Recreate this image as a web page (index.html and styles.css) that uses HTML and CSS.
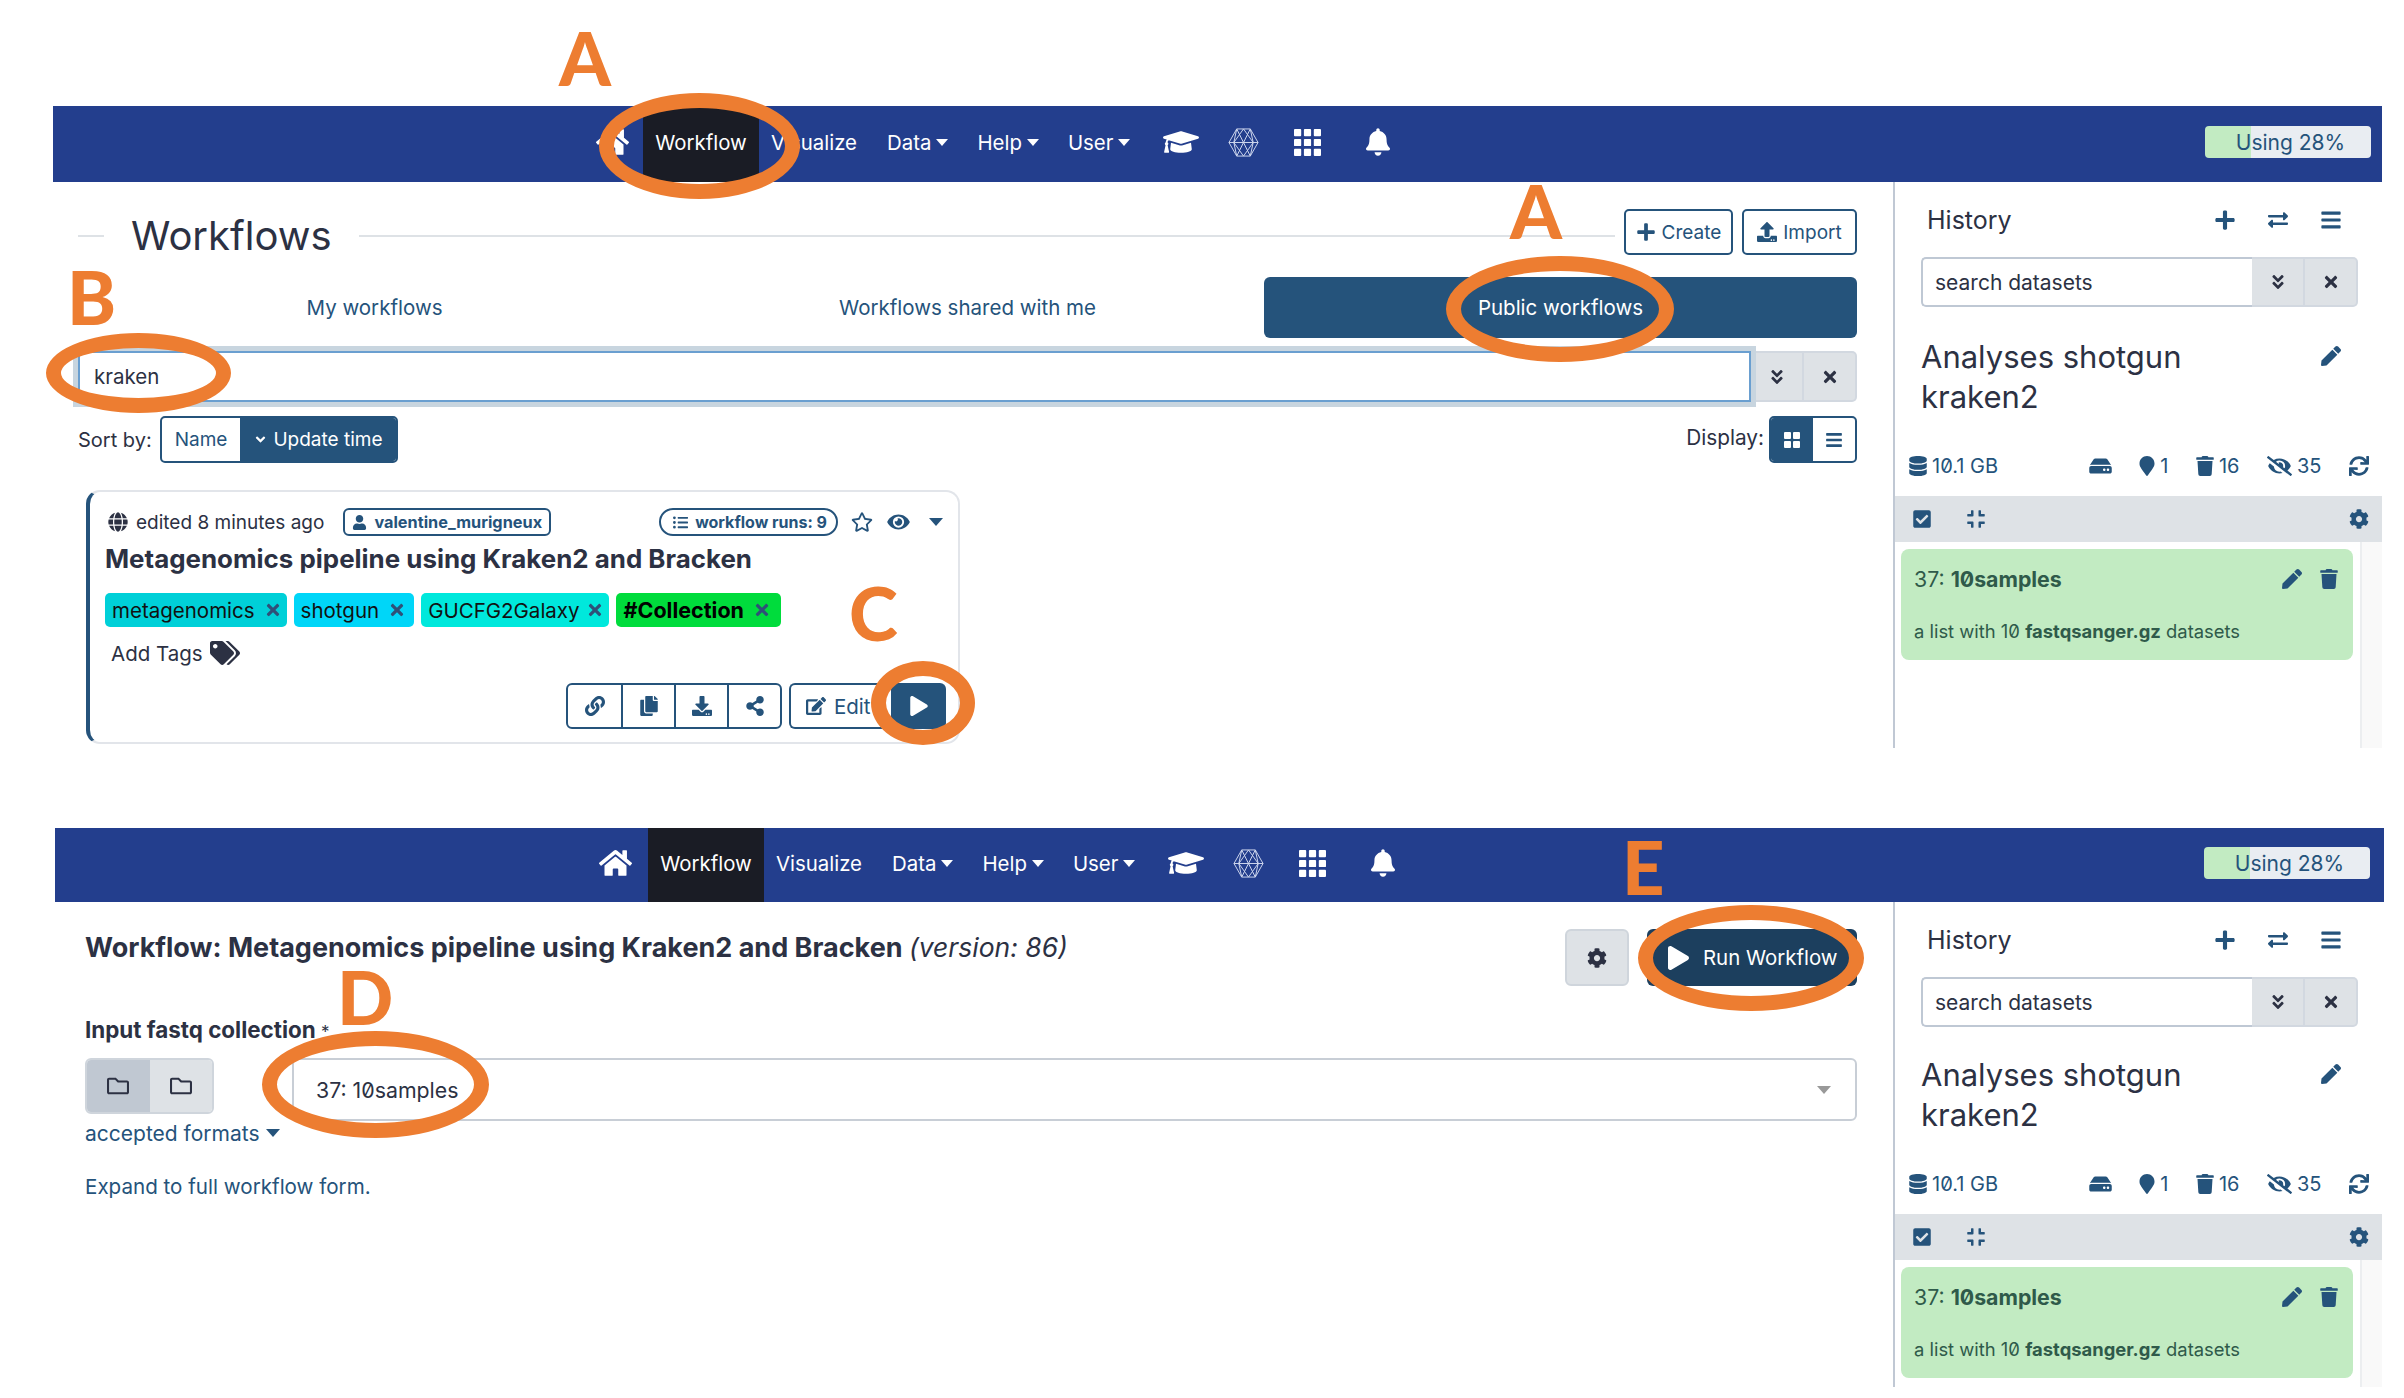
FILE: index.html
```html
<!DOCTYPE html>
<html lang="en">
  <head>
    <meta charset="UTF-8" />
    <title>Galaxy workflows</title>
    <link rel="stylesheet" href="styles.css">
  </head>
  <body>
    <svg class="sprites" aria-hidden="true">
      <symbol id="i-home" viewBox="0 0 576 512"><path d="M280.37 148.26L96 300.11V464a16 16 0 0 0 16 16l112.06-.29a16 16 0 0 0 15.92-16V368a16 16 0 0 1 16-16h64a16 16 0 0 1 16 16v95.64a16 16 0 0 0 16 16.05L464 480a16 16 0 0 0 16-16V300L295.67 148.26a12.19 12.19 0 0 0-15.3 0zM571.6 251.47L488 182.56V44.05a12 12 0 0 0-12-12h-56a12 12 0 0 0-12 12v72.61L318.47 43a48 48 0 0 0-61 0L4.34 251.47a12 12 0 0 0-1.6 16.9l25.5 31A12 12 0 0 0 45.15 301l235.22-193.74a12.19 12.19 0 0 1 15.3 0L530.9 301a12 12 0 0 0 16.9-1.6l25.5-31a12 12 0 0 0-1.7-16.93z"/></symbol>
      <symbol id="i-cap" viewBox="0 0 640 512"><path d="M622.34 153.2L343.4 67.5c-15.2-4.67-31.6-4.67-46.79 0L17.66 153.2c-23.54 7.23-23.54 38.36 0 45.59l48.63 14.94c-10.67 13.19-17.23 29.28-17.88 46.9C38.78 266.15 32 276.11 32 288c0 10.78 5.68 19.85 13.86 25.65L20.33 428.53C18.11 438.52 25.71 448 35.94 448h56.11c10.24 0 17.84-9.48 15.62-19.47L82.14 313.65C90.32 307.85 96 298.78 96 288c0-11.57-6.47-21.25-15.66-26.87.76-15.02 8.44-28.3 20.69-36.72L296.6 284.5c9.06 2.78 26.44 6.25 46.79 0l278.95-85.7c23.55-7.24 23.55-38.36 0-45.6zM352.79 315.09c-28.53 8.76-52.84 3.92-65.59 0l-145.02-44.55L128 384c0 35.35 85.96 64 192 64s192-28.65 192-64l-14.18-113.47-145.03 44.56z"/></symbol>
      <symbol id="i-hex" viewBox="0 0 32 32"><g fill="none" stroke="currentColor" stroke-width="1"><path d="M9 2h14l8 14-8 14H9L1 16z"/><path d="M9 2l14 28M23 2L9 30M1 16h30M9 2l-3 14 3 14M23 2l3 14-3 14M6 16l10-14 10 14-10 14z"/></g></symbol>
      <symbol id="i-grid" viewBox="0 0 30 30"><rect width="8" height="8" rx="1"/><rect x="11" width="8" height="8" rx="1"/><rect x="22" width="8" height="8" rx="1"/><rect y="11" width="8" height="8" rx="1"/><rect x="11" y="11" width="8" height="8" rx="1"/><rect x="22" y="11" width="8" height="8" rx="1"/><rect y="22" width="8" height="8" rx="1"/><rect x="11" y="22" width="8" height="8" rx="1"/><rect x="22" y="22" width="8" height="8" rx="1"/></symbol>
      <symbol id="i-large" viewBox="0 0 16 16"><rect width="7" height="7" rx="1"/><rect x="9" width="7" height="7" rx="1"/><rect y="9" width="7" height="7" rx="1"/><rect x="9" y="9" width="7" height="7" rx="1"/></symbol>
      <symbol id="i-bell" viewBox="0 0 448 512"><path d="M224 512c35.32 0 63.97-28.65 63.97-64H160.03c0 35.35 28.65 64 63.97 64zm215.39-149.71c-19.32-20.76-55.47-51.99-55.47-154.29 0-77.7-54.48-139.9-127.94-155.16V32c0-17.67-14.32-32-31.98-32s-31.98 14.33-31.98 32v20.84C118.56 68.1 64.08 130.3 64.08 208c0 102.3-36.15 133.53-55.47 154.29-6 6.45-8.66 14.16-8.61 21.71.11 16.4 12.98 32 32.1 32h383.8c19.12 0 32-15.6 32.1-32 .05-7.55-2.61-15.27-8.61-21.71z"/></symbol>
      <symbol id="i-plus" viewBox="0 0 448 512"><path d="M416 208H272V64c0-17.67-14.33-32-32-32h-32c-17.67 0-32 14.33-32 32v144H32c-17.67 0-32 14.33-32 32v32c0 17.67 14.33 32 32 32h144v144c0 17.67 14.33 32 32 32h32c17.67 0 32-14.33 32-32V304h144c17.67 0 32-14.33 32-32v-32c0-17.67-14.33-32-32-32z"/></symbol>
      <symbol id="i-exchange" viewBox="0 0 512 512"><path d="M0 168v-16c0-13.255 10.745-24 24-24h360V80c0-21.367 25.899-32.042 40.971-16.971l80 80c9.372 9.373 9.372 24.569 0 33.941l-80 80C409.956 271.982 384 261.456 384 240v-48H24c-13.255 0-24-10.745-24-24zm488 152H128v-48c0-21.314-25.862-32.08-40.971-16.971l-80 80c-9.372 9.373-9.372 24.569 0 33.941l80 80C102.057 463.997 128 453.437 128 432v-48h360c13.255 0 24-10.745 24-24v-16c0-13.255-10.745-24-24-24z"/></symbol>
      <symbol id="i-bars" viewBox="0 0 448 512"><path d="M16 132h416c8.837 0 16-7.163 16-16V76c0-8.837-7.163-16-16-16H16C7.163 60 0 67.163 0 76v40c0 8.837 7.163 16 16 16zm0 160h416c8.837 0 16-7.163 16-16v-40c0-8.837-7.163-16-16-16H16c-8.837 0-16 7.163-16 16v40c0 8.837 7.163 16 16 16zm0 160h416c8.837 0 16-7.163 16-16v-40c0-8.837-7.163-16-16-16H16c-8.837 0-16 7.163-16 16v40c0 8.837 7.163 16 16 16z"/></symbol>
      <symbol id="i-dbl" viewBox="0 0 320 512"><path d="M143 256.3L7 120.3c-9.4-9.4-9.4-24.6 0-33.9l22.6-22.6c9.4-9.4 24.6-9.4 33.9 0l96.4 96.4 96.4-96.4c9.4-9.4 24.6-9.4 33.9 0L313 86.3c9.4 9.4 9.4 24.6 0 33.9l-136 136c-9.4 9.5-24.6 9.5-34 .1zm34 192l136-136c9.4-9.4 9.4-24.6 0-33.9l-22.6-22.6c-9.4-9.4-24.6-9.4-33.9 0L160 352.1l-96.4-96.4c-9.4-9.4-24.6-9.4-33.9 0L7 278.3c-9.4 9.4-9.4 24.6 0 33.9l136 136c9.4 9.5 24.6 9.5 34 .1z"/></symbol>
      <symbol id="i-angle" viewBox="0 0 320 512"><path d="M143 352.3L7 216.3c-9.4-9.4-9.4-24.6 0-33.9l22.6-22.6c9.4-9.4 24.6-9.4 33.9 0l96.4 96.4 96.4-96.4c9.4-9.4 24.6-9.4 33.9 0l22.6 22.6c9.4 9.4 9.4 24.6 0 33.9l-136 136c-9.2 9.4-24.4 9.4-33.8 0z"/></symbol>
      <symbol id="i-times" viewBox="0 0 352 512"><path d="M242.72 256l100.07-100.07c12.28-12.28 12.28-32.19 0-44.48l-22.24-22.24c-12.28-12.28-32.19-12.28-44.48 0L176 189.28 75.93 89.21c-12.28-12.28-32.19-12.28-44.48 0L9.21 111.45c-12.28 12.28-12.28 32.19 0 44.48L109.28 256 9.21 356.07c-12.28 12.28-12.28 32.19 0 44.48l22.24 22.24c12.28 12.28 32.2 12.28 44.48 0L176 322.72l100.07 100.07c12.28 12.28 32.2 12.28 44.48 0l22.24-22.24c12.28-12.28 12.28-32.19 0-44.48L242.72 256z"/></symbol>
      <symbol id="i-pen" viewBox="0 0 512 512"><path d="M290.74 93.24l128.02 128.02-277.99 277.99-114.14 12.6C11.35 513.54-1.56 500.62.14 485.34l12.7-114.22 277.9-277.88zm207.2-19.06l-60.11-60.11c-18.75-18.75-49.16-18.75-67.91 0l-56.55 56.55 128.02 128.02 56.55-56.55c18.75-18.76 18.75-49.16 0-67.91z"/></symbol>
      <symbol id="i-db" viewBox="0 0 448 512"><path d="M448 73.143v45.714C448 159.143 347.667 192 224 192S0 159.143 0 118.857V73.143C0 32.857 100.333 0 224 0s224 32.857 224 73.143zM448 176v102.857C448 319.143 347.667 352 224 352S0 319.143 0 278.857V176c48.125 33.143 136.208 48.572 224 48.572S399.874 209.143 448 176zm0 160v102.857C448 479.143 347.667 512 224 512S0 479.143 0 438.857V336c48.125 33.143 136.208 48.572 224 48.572S399.874 369.143 448 336z"/></symbol>
      <symbol id="i-hdd" viewBox="0 0 576 512"><path d="M576 304v96c0 26.51-21.49 48-48 48H48c-26.51 0-48-21.49-48-48v-96c0-26.51 21.49-48 48-48h480c26.51 0 48 21.49 48 48zm-48-80a79.557 79.557 0 0 1 30.777 6.165L462.25 85.374A48.003 48.003 0 0 0 422.311 64H153.689a48 48 0 0 0-39.938 21.374L17.223 230.165A79.557 79.557 0 0 1 48 224h480zm-48 96c-17.673 0-32 14.327-32 32s14.327 32 32 32 32-14.327 32-32-14.327-32-32-32zm-96 0c-17.673 0-32 14.327-32 32s14.327 32 32 32 32-14.327 32-32-14.327-32-32-32z"/></symbol>
      <symbol id="i-pin" viewBox="0 0 384 512"><path d="M172.268 501.67C26.97 291.031 0 269.413 0 192 0 85.961 85.961 0 192 0s192 85.961 192 192c0 77.413-26.97 99.031-172.268 309.67-9.535 13.774-29.93 13.773-39.464 0z"/></symbol>
      <symbol id="i-trash" viewBox="0 0 448 512"><path d="M432 32H312l-9.4-18.7A24 24 0 0 0 281.1 0H166.8a23.72 23.72 0 0 0-21.4 13.3L136 32H16A16 16 0 0 0 0 48v32a16 16 0 0 0 16 16h416a16 16 0 0 0 16-16V48a16 16 0 0 0-16-16zM53.2 467a48 48 0 0 0 47.9 45h245.8a48 48 0 0 0 47.9-45L416 128H32z"/></symbol>
      <symbol id="i-slash" viewBox="0 0 640 512"><path d="M320 400c-75.85 0-137.25-58.71-142.9-133.11L72.2 185.82c-13.79 17.3-26.48 35.59-36.72 55.59a32.35 32.35 0 0 0 0 29.19C89.71 376.41 197.07 448 320 448c26.91 0 52.87-4 77.89-10.46L346 397.39a144.13 144.13 0 0 1-26 2.61zm313.82 58.1l-110.55-85.44a331.25 331.25 0 0 0 81.25-102.07 32.35 32.35 0 0 0 0-29.19C550.29 135.59 442.93 64 320 64a308.15 308.15 0 0 0-147.32 37.7L45.46 3.37A16 16 0 0 0 23 6.18L3.37 31.45A16 16 0 0 0 6.18 53.9l588.36 454.73a16 16 0 0 0 22.46-2.81l19.64-25.27a16 16 0 0 0-2.82-22.45zm-183.72-142l-39.3-30.38A94.75 94.75 0 0 0 416 256a94.76 94.76 0 0 0-121.31-92.21A47.65 47.65 0 0 1 304 192a46.64 46.64 0 0 1-1.54 10l-73.61-56.89A142.31 142.31 0 0 1 320 112a143.92 143.92 0 0 1 144 144c0 21.63-5.29 41.79-13.9 60.11z"/></symbol>
      <symbol id="i-sync" viewBox="0 0 512 512"><path d="M440.65 12.57l4 82.77A247.16 247.16 0 0 0 255.83 8C134.73 8 33.91 94.92 12.29 209.82A12 12 0 0 0 24.09 224h49.05a12 12 0 0 0 11.67-9.26 175.91 175.91 0 0 1 317-56.94l-101.46-4.86a12 12 0 0 0-12.57 12v47.41a12 12 0 0 0 12 12H500a12 12 0 0 0 12-12V12a12 12 0 0 0-12-12h-47.37a12 12 0 0 0-11.98 12.57zM255.83 432a175.61 175.61 0 0 1-146-77.8l101.8 4.87a12 12 0 0 0 12.57-12v-47.4a12 12 0 0 0-12-12H12a12 12 0 0 0-12 12V500a12 12 0 0 0 12 12h47.35a12 12 0 0 0 12-12.6l-4.15-82.57A247.17 247.17 0 0 0 255.83 504c121.11 0 221.93-86.92 243.55-201.82a12 12 0 0 0-11.8-14.18h-49.05a12 12 0 0 0-11.67 9.26A175.86 175.86 0 0 1 255.83 432z"/></symbol>
      <symbol id="i-check" viewBox="0 0 448 512"><path d="M400 480H48c-26.51 0-48-21.49-48-48V80c0-26.51 21.49-48 48-48h352c26.51 0 48 21.49 48 48v352c0 26.51-21.49 48-48 48zm-204.686-98.059l184-184c6.248-6.248 6.248-16.379 0-22.627l-22.627-22.627c-6.248-6.248-16.379-6.249-22.628 0L184 302.745l-70.059-70.059c-6.248-6.248-16.379-6.248-22.628 0l-22.627 22.627c-6.248 6.248-6.248 16.379 0 22.627l104 104c6.249 6.25 16.379 6.25 22.628.001z"/></symbol>
      <symbol id="i-compress" viewBox="0 0 448 512"><path d="M436 192H312c-13.3 0-24-10.7-24-24V44c0-6.6 5.4-12 12-12h40c6.6 0 12 5.4 12 12v84h84c6.6 0 12 5.4 12 12v40c0 6.6-5.4 12-12 12zm-276-24V44c0-6.6-5.4-12-12-12h-40c-6.6 0-12 5.4-12 12v84H12c-6.6 0-12 5.4-12 12v40c0 6.6 5.4 12 12 12h124c13.3 0 24-10.7 24-24zm0 300V344c0-13.3-10.7-24-24-24H12c-6.6 0-12 5.4-12 12v40c0 6.6 5.4 12 12 12h84v84c0 6.6 5.4 12 12 12h40c6.6 0 12-5.4 12-12zm192 0v-84h84c6.6 0 12-5.4 12-12v-40c0-6.6-5.4-12-12-12H312c-13.3 0-24 10.7-24 24v124c0 6.6 5.4 12 12 12h40c6.6 0 12-5.4 12-12z"/></symbol>
      <symbol id="i-cog" viewBox="0 0 512 512"><path d="M487.4 315.7l-42.6-24.6c4.3-23.2 4.3-47 0-70.2l42.6-24.6c4.9-2.8 7.1-8.6 5.5-14-11.1-35.6-30-67.8-54.7-94.6-3.8-4.1-10-5.1-14.8-2.3L380.8 110c-17.9-15.4-38.5-27.3-60.8-35.1V25.8c0-5.6-3.9-10.5-9.4-11.7-36.7-8.2-74.3-7.8-109.2 0-5.5 1.2-9.4 6.1-9.4 11.7V75c-22.2 7.9-42.8 19.8-60.8 35.1L88.7 85.5c-4.9-2.8-11-1.9-14.8 2.3-24.7 26.7-43.6 58.9-54.7 94.6-1.7 5.4.6 11.2 5.5 14L67.3 221c-4.3 23.2-4.3 47 0 70.2l-42.6 24.6c-4.9 2.8-7.1 8.6-5.5 14 11.1 35.6 30 67.8 54.7 94.6 3.8 4.1 10 5.1 14.8 2.3l42.6-24.6c17.9 15.4 38.5 27.3 60.8 35.1v49.2c0 5.6 3.9 10.5 9.4 11.7 36.7 8.2 74.3 7.8 109.2 0 5.5-1.2 9.4-6.1 9.4-11.7v-49.2c22.2-7.9 42.8-19.8 60.8-35.1l42.6 24.6c4.9 2.8 11 1.9 14.8-2.3 24.7-26.7 43.6-58.9 54.7-94.6 1.5-5.5-.7-11.3-5.6-14.1zM256 336c-44.1 0-80-35.9-80-80s35.9-80 80-80 80 35.9 80 80-35.9 80-80 80z"/></symbol>
      <symbol id="i-link" viewBox="0 0 512 512"><path d="M326.612 185.391c59.747 59.809 58.927 155.698.36 214.59-.11.12-.24.25-.36.37l-67.2 67.2c-59.27 59.27-155.699 59.262-214.96 0-59.27-59.26-59.27-155.7 0-214.96l37.106-37.106c9.84-9.84 26.786-3.3 27.294 10.606.648 17.722 3.826 35.527 9.69 52.721 1.986 5.822.567 12.262-3.783 16.612l-13.087 13.087c-28.026 28.026-28.905 73.66-1.155 101.96 28.024 28.579 74.086 28.749 102.325.51l67.2-67.19c28.191-28.191 28.073-73.757 0-101.83-3.701-3.694-7.429-6.564-10.341-8.569a16.037 16.037 0 0 1-6.947-12.606c-.396-10.567 3.348-21.456 11.698-29.806l21.054-21.055c5.521-5.521 14.182-6.199 20.584-1.731a152.482 152.482 0 0 1 20.522 17.197zM467.547 44.449c-59.261-59.262-155.69-59.27-214.96 0l-67.2 67.2c-.12.12-.25.25-.36.37-58.566 58.892-59.387 154.781.36 214.59a152.454 152.454 0 0 0 20.521 17.196c6.402 4.468 15.064 3.789 20.584-1.731l21.054-21.055c8.35-8.35 12.094-19.239 11.698-29.806a16.037 16.037 0 0 0-6.947-12.606c-2.912-2.005-6.64-4.875-10.341-8.569-28.073-28.073-28.191-73.639 0-101.83l67.2-67.19c28.239-28.239 74.3-28.069 102.325.51 27.75 28.3 26.872 73.934-1.155 101.96l-13.087 13.087c-4.35 4.35-5.769 10.79-3.783 16.612 5.864 17.194 9.042 34.999 9.69 52.721.509 13.906 17.454 20.446 27.294 10.606l37.106-37.106c59.271-59.259 59.271-155.699.001-214.959z"/></symbol>
      <symbol id="i-copy" viewBox="0 0 448 512"><path d="M320 448v40c0 13.255-10.745 24-24 24H24c-13.255 0-24-10.745-24-24V120c0-13.255 10.745-24 24-24h72v296c0 30.879 25.121 56 56 56h168zm0-344V0H152c-13.255 0-24 10.745-24 24v368c0 13.255 10.745 24 24 24h272c13.255 0 24-10.745 24-24V128H344c-13.2 0-24-10.8-24-24zm120.971-31.029L375.029 7.029A24 24 0 0 0 358.059 0H352v96h96v-6.059a24 24 0 0 0-7.029-16.97z"/></symbol>
      <symbol id="i-download" viewBox="0 0 512 512"><path d="M216 0h80c13.3 0 24 10.7 24 24v168h87.7c17.8 0 26.7 21.5 14.1 34.1L269.7 378.3c-7.5 7.5-19.8 7.5-27.3 0L90.1 226.1c-12.6-12.6-3.7-34.1 14.1-34.1H192V24c0-13.3 10.7-24 24-24zm296 376v112c0 13.3-10.7 24-24 24H24c-13.3 0-24-10.7-24-24V376c0-13.3 10.7-24 24-24h146.7l49 49c20.1 20.1 52.5 20.1 72.6 0l49-49H488c13.3 0 24 10.7 24 24zm-124 88c0-11-9-20-20-20s-20 9-20 20 9 20 20 20 20-9 20-20zm64 0c0-11-9-20-20-20s-20 9-20 20 9 20 20 20 20-9 20-20z"/></symbol>
      <symbol id="i-upload" viewBox="0 0 512 512"><path d="M296 384h-80c-13.3 0-24-10.7-24-24V192h-87.7c-17.8 0-26.7-21.5-14.1-34.1L242.3 5.7c7.5-7.5 19.8-7.5 27.3 0l152.2 152.2c12.6 12.6 3.7 34.1-14.1 34.1H320v168c0 13.3-10.7 24-24 24zm216-8v112c0 13.3-10.7 24-24 24H24c-13.3 0-24-10.7-24-24V376c0-13.3 10.7-24 24-24h136v8c0 30.9 25.1 56 56 56h80c30.9 0 56-25.1 56-56v-8h136c13.3 0 24 10.7 24 24zm-124 88c0-11-9-20-20-20s-20 9-20 20 9 20 20 20 20-9 20-20zm64 0c0-11-9-20-20-20s-20 9-20 20 9 20 20 20 20-9 20-20z"/></symbol>
      <symbol id="i-share" viewBox="0 0 448 512"><path d="M352 320c-22.608 0-43.387 7.819-59.79 20.895l-102.486-64.054a96.551 96.551 0 0 0 0-41.683l102.486-64.054C308.613 184.181 329.392 192 352 192c53.019 0 96-42.981 96-96S405.019 0 352 0s-96 42.981-96 96c0 7.158.79 14.13 2.276 20.841L155.79 180.895C139.387 167.819 118.608 160 96 160c-53.019 0-96 42.981-96 96s42.981 96 96 96c22.608 0 43.387-7.819 59.79-20.895l102.486 64.054A96.301 96.301 0 0 0 256 416c0 53.019 42.981 96 96 96s96-42.981 96-96-42.981-96-96-96z"/></symbol>
      <symbol id="i-edit" viewBox="0 0 576 512"><path d="M402.6 83.2l90.2 90.2c3.8 3.8 3.8 10 0 13.8L274.4 405.6l-92.8 10.3c-12.4 1.4-22.9-9.1-21.5-21.5l10.3-92.8L388.8 83.2c3.8-3.8 10-3.8 13.8 0zm162-22.9l-48.8-48.8c-15.2-15.2-39.9-15.2-55.2 0l-35.4 35.4c-3.8 3.8-3.8 10 0 13.8l90.2 90.2c3.8 3.8 10 3.8 13.8 0l35.4-35.4c15.2-15.3 15.2-40 0-55.2zM384 346.2V448H64V128h229.8c3.2 0 6.2-1.3 8.5-3.5l40-40c7.6-7.6 2.2-20.5-8.5-20.5H48C21.5 64 0 85.5 0 112v352c0 26.5 21.5 48 48 48h352c26.5 0 48-21.5 48-48V306.2c0-10.7-12.9-16-20.5-8.5l-40 40c-2.2 2.3-3.5 5.3-3.5 8.5z"/></symbol>
      <symbol id="i-play" viewBox="0 0 448 512"><path d="M424.4 214.7L72.4 6.6C43.8-10.3 0 6.1 0 47.9V464c0 37.5 40.7 60.1 72.4 41.3l352-208c31.4-18.5 31.5-64.1 0-82.6z"/></symbol>
      <symbol id="i-user" viewBox="0 0 448 512"><path d="M224 256c70.7 0 128-57.3 128-128S294.7 0 224 0 96 57.3 96 128s57.3 128 128 128zm89.6 32h-16.7c-22.2 10.2-46.9 16-72.9 16s-50.6-5.8-72.9-16h-16.7C60.2 288 0 348.2 0 422.4V464c0 26.5 21.5 48 48 48h352c26.5 0 48-21.5 48-48v-41.6c0-74.2-60.2-134.4-134.4-134.4z"/></symbol>
      <symbol id="i-globe" viewBox="0 0 496 512"><path d="M336.5 160C322 70.7 287.8 8 248 8s-74 62.7-88.5 152h177zM152 256c0 22.2 1.2 43.5 3.3 64h185.3c2.1-20.5 3.3-41.8 3.3-64s-1.2-43.5-3.3-64H155.3c-2.1 20.5-3.3 41.8-3.3 64zm324.7-96c-28.6-67.9-86.5-120.4-158-141.6 24.4 33.8 41.2 84.7 50 141.6h108zM177.2 18.4C105.8 39.6 47.8 92.1 19.3 160h108c8.7-56.9 25.5-107.8 49.9-141.6zM487.4 192H372.7c2.1 21 3.3 42.5 3.3 64s-1.2 43-3.3 64h114.6c5.5-20.5 8.6-41.8 8.6-64s-3.1-43.5-8.5-64zM120 256c0-21.5 1.2-43 3.3-64H8.6C3.2 212.5 0 233.8 0 256s3.2 43.5 8.6 64h114.6c-2-21-3.2-42.5-3.2-64zm39.5 96c14.5 89.3 48.7 152 88.5 152s74-62.7 88.5-152h-177zm159.3 141.6c71.4-21.2 129.4-73.7 158-141.6h-108c-8.8 56.9-25.6 107.8-50 141.6zM19.3 352c28.6 67.9 86.5 120.4 158 141.6-24.4-33.8-41.2-84.7-50-141.6h-108z"/></symbol>
      <symbol id="i-list" viewBox="0 0 512 512"><path d="M48 48a48 48 0 1 0 48 48 48 48 0 0 0-48-48zm0 160a48 48 0 1 0 48 48 48 48 0 0 0-48-48zm0 160a48 48 0 1 0 48 48 48 48 0 0 0-48-48zm448 16H176a16 16 0 0 0-16 16v32a16 16 0 0 0 16 16h320a16 16 0 0 0 16-16v-32a16 16 0 0 0-16-16zm0-320H176a16 16 0 0 0-16 16v32a16 16 0 0 0 16 16h320a16 16 0 0 0 16-16V80a16 16 0 0 0-16-16zm0 160H176a16 16 0 0 0-16 16v32a16 16 0 0 0 16 16h320a16 16 0 0 0 16-16v-32a16 16 0 0 0-16-16z"/></symbol>
      <symbol id="i-star" viewBox="0 0 576 512"><path d="M528.1 171.5L382 150.2 316.7 17.8c-11.7-23.6-45.6-23.9-57.4 0L194 150.2 47.9 171.5c-26.2 3.8-36.7 36.1-17.7 54.6l105.7 103-25 145.5c-4.5 26.3 23.2 46 46.4 33.7L288 439.6l130.7 68.7c23.2 12.2 50.9-7.4 46.4-33.7l-25-145.5 105.7-103c19-18.5 8.5-50.8-17.7-54.6zM388.6 312.3l23.7 138.4L288 385.4l-124.3 65.3 23.7-138.4-100.6-98 139-20.2 62.2-126 62.2 126 139 20.2-100.6 98z"/></symbol>
      <symbol id="i-eye" viewBox="0 0 576 512"><path d="M572.52 241.4C518.29 135.59 410.93 64 288 64S57.68 135.64 3.48 241.41a32.35 32.35 0 0 0 0 29.19C57.71 376.41 165.07 448 288 448s230.32-71.64 284.52-177.41a32.35 32.35 0 0 0 0-29.19zM288 400a144 144 0 1 1 144-144 143.93 143.93 0 0 1-144 144zm0-240a95.31 95.31 0 0 0-25.31 3.79 47.85 47.85 0 0 1-66.9 66.9A95.78 95.78 0 1 0 288 160z"/></symbol>
      <symbol id="i-tags" viewBox="0 0 640 512"><path d="M497.941 225.941L286.059 14.059A48 48 0 0 0 252.118 0H48C21.49 0 0 21.49 0 48v204.118a48 48 0 0 0 14.059 33.941l211.882 211.882c18.744 18.745 49.136 18.746 67.882 0l204.118-204.118c18.745-18.745 18.745-49.137 0-67.882zM112 160c-26.51 0-48-21.49-48-48s21.49-48 48-48 48 21.49 48 48-21.49 48-48 48zm513.941 133.823L421.823 497.941c-18.745 18.745-49.137 18.745-67.882 0l-.36-.36L527.64 323.522c16.999-16.999 26.36-39.6 26.36-63.64s-9.362-46.641-26.36-63.64L331.397 0h48.721a48 48 0 0 1 33.941 14.059l211.882 211.882c18.745 18.745 18.745 49.137 0 67.882z"/></symbol>
      <symbol id="i-folder" viewBox="0 0 512 512"><path d="M464 128H272l-54.63-54.63c-6-6-14.14-9.37-22.63-9.37H48C21.49 64 0 85.49 0 112v288c0 26.51 21.49 48 48 48h416c26.51 0 48-21.49 48-48V176c0-26.51-21.49-48-48-48zm0 272H48V112h140.12l54.63 54.63c6 6 14.14 9.37 22.63 9.37H464v224z"/></symbol>
    </svg>

    <!-- first shot: workflow list -->
    <section class="shot shot-list">
      <header class="masthead">
        <svg class="nav-home"><use href="#i-home"/></svg>
        <a class="nav-item active">Workflow</a>
        <a class="nav-item">Visualize</a>
        <a class="nav-item caret">Data</a>
        <a class="nav-item caret">Help</a>
        <a class="nav-item caret">User</a>
        <svg class="nav-cap"><use href="#i-cap"/></svg>
        <svg class="nav-hex"><use href="#i-hex"/></svg>
        <svg class="nav-grid"><use href="#i-grid"/></svg>
        <svg class="nav-bell"><use href="#i-bell"/></svg>
        <div class="quota"><span class="quota-text">Using 28%</span></div>
      </header>
      <div class="body-row">
        <main class="center">
          <div class="heading-row">
            <div class="heading">
              <span class="heading-line short"></span>
              <h1>Workflows</h1>
              <span class="heading-line"></span>
            </div>
            <button class="btn-outline btn-create"><svg class="ico"><use href="#i-plus"/></svg>Create</button>
            <button class="btn-outline btn-import"><svg class="ico"><use href="#i-upload"/></svg>Import</button>
          </div>
          <nav class="tabs">
            <a class="tab">My workflows</a>
            <a class="tab">Workflows shared with me</a>
            <a class="tab selected">Public workflows</a>
          </nav>
          <div class="search">
            <div class="search-input focus">kraken</div>
            <div class="search-btn"><svg class="ico"><use href="#i-dbl"/></svg></div>
            <div class="search-btn"><svg class="ico"><use href="#i-times"/></svg></div>
          </div>
          <div class="sort-row">
            <span class="sort-label">Sort by:</span>
            <div class="toggle">
              <span class="toggle-item">Name</span>
              <span class="toggle-item on"><svg class="ico-sm"><use href="#i-angle"/></svg>Update time</span>
            </div>
            <span class="display-label">Display:</span>
            <div class="toggle">
              <span class="toggle-item on square"><svg class="ico"><use href="#i-large"/></svg></span>
              <span class="toggle-item square"><svg class="ico"><use href="#i-bars"/></svg></span>
            </div>
          </div>
          <article class="wf-card">
            <div class="wf-meta">
              <svg class="ico globe"><use href="#i-globe"/></svg>
              <span>edited 8 minutes ago</span>
              <span class="badge"><svg class="ico-sm"><use href="#i-user"/></svg>valentine_murigneux</span>
              <span class="badge pill"><svg class="ico-sm"><use href="#i-list"/></svg>workflow runs: 9</span>
              <svg class="ico star"><use href="#i-star"/></svg>
              <svg class="ico eye"><use href="#i-eye"/></svg>
              <span class="tri"></span>
            </div>
            <h2 class="wf-title">Metagenomics pipeline using Kraken2 and Bracken</h2>
            <div class="tags">
              <span class="tag t-teal">metagenomics<svg><use href="#i-times"/></svg></span>
              <span class="tag t-sky">shotgun<svg><use href="#i-times"/></svg></span>
              <span class="tag t-mint">GUCFG2Galaxy<svg><use href="#i-times"/></svg></span>
              <span class="tag t-green">#Collection<svg><use href="#i-times"/></svg></span>
            </div>
            <div class="add-tags">Add Tags<svg><use href="#i-tags"/></svg></div>
            <div class="wf-actions">
              <div class="act-group">
                <span class="act"><svg class="ico"><use href="#i-link"/></svg></span>
                <span class="act"><svg class="ico"><use href="#i-copy"/></svg></span>
                <span class="act"><svg class="ico"><use href="#i-download"/></svg></span>
                <span class="act"><svg class="ico"><use href="#i-share"/></svg></span>
              </div>
              <span class="act-edit"><svg class="ico"><use href="#i-edit"/></svg>Edit</span>
              <span class="act-run"><svg class="ico"><use href="#i-play"/></svg></span>
            </div>
          </article>
        </main>
        <aside class="side">
          <div class="side-head">
            <span class="side-name">History</span>
            <svg class="ico head-ico"><use href="#i-plus"/></svg>
            <svg class="ico head-ico"><use href="#i-exchange"/></svg>
            <svg class="ico head-ico"><use href="#i-bars"/></svg>
          </div>
          <div class="side-search">
            <div class="search-input">search datasets</div>
            <div class="search-btn"><svg class="ico"><use href="#i-dbl"/></svg></div>
            <div class="search-btn"><svg class="ico"><use href="#i-times"/></svg></div>
          </div>
          <div class="side-title">
            <span>Analyses shotgun kraken2</span>
            <svg class="ico"><use href="#i-pen"/></svg>
          </div>
          <div class="stats">
            <span class="stat first"><svg class="s-db"><use href="#i-db"/></svg>10.1 GB</span>
            <span class="stat"><svg class="s-hdd"><use href="#i-hdd"/></svg></span>
            <span class="stat"><svg class="s-pin"><use href="#i-pin"/></svg>1</span>
            <span class="stat"><svg class="s-trash"><use href="#i-trash"/></svg>16</span>
            <span class="stat"><svg class="s-slash"><use href="#i-slash"/></svg>35</span>
            <span class="stat"><svg class="s-sync"><use href="#i-sync"/></svg></span>
          </div>
          <div class="tool-bar">
            <svg class="ico"><use href="#i-check"/></svg>
            <svg class="ico"><use href="#i-compress"/></svg>
            <svg class="ico gear"><use href="#i-cog"/></svg>
          </div>
          <div class="side-list">
            <div class="side-items">
              <div class="dataset">
                <div class="dataset-head">
                  <span>37: <b>10samples</b></span>
                  <svg class="ico"><use href="#i-pen"/></svg>
                  <svg class="ico"><use href="#i-trash"/></svg>
                </div>
                <div class="dataset-info">a list with 10 <b>fastqsanger.gz</b> datasets</div>
              </div>
            </div>
            <div class="scroll-strip"></div>
          </div>
        </aside>
      </div>
    </section>

    <!-- second shot: run form -->
    <section class="shot shot-run">
      <header class="masthead">
        <svg class="nav-home"><use href="#i-home"/></svg>
        <a class="nav-item active">Workflow</a>
        <a class="nav-item">Visualize</a>
        <a class="nav-item caret">Data</a>
        <a class="nav-item caret">Help</a>
        <a class="nav-item caret">User</a>
        <svg class="nav-cap"><use href="#i-cap"/></svg>
        <svg class="nav-hex"><use href="#i-hex"/></svg>
        <svg class="nav-grid"><use href="#i-grid"/></svg>
        <svg class="nav-bell"><use href="#i-bell"/></svg>
        <div class="quota"><span class="quota-text">Using 28%</span></div>
      </header>
      <div class="body-row">
        <main class="center">
          <div class="run-head">
            <h2 class="run-title">Workflow: Metagenomics pipeline using Kraken2 and Bracken <em>(version: 86)</em></h2>
            <button class="btn-cog"><svg class="ico"><use href="#i-cog"/></svg></button>
            <button class="btn-run"><svg class="ico"><use href="#i-play"/></svg>Run Workflow</button>
          </div>
          <label class="field-label">Input fastq collection <span class="req">*</span></label>
          <div class="field-row">
            <div class="field-left">
              <div class="seg">
                <span class="seg-item on"><svg class="ico"><use href="#i-folder"/></svg></span>
                <span class="seg-item"><svg class="ico"><use href="#i-folder"/></svg></span>
              </div>
              <a class="formats">accepted formats<span class="tri small"></span></a>
            </div>
            <div class="select">37: 10samples<span class="tri grey"></span></div>
          </div>
          <a class="expand">Expand to full workflow form.</a>
        </main>
        <aside class="side">
          <div class="side-head">
            <span class="side-name">History</span>
            <svg class="ico head-ico"><use href="#i-plus"/></svg>
            <svg class="ico head-ico"><use href="#i-exchange"/></svg>
            <svg class="ico head-ico"><use href="#i-bars"/></svg>
          </div>
          <div class="side-search">
            <div class="search-input">search datasets</div>
            <div class="search-btn"><svg class="ico"><use href="#i-dbl"/></svg></div>
            <div class="search-btn"><svg class="ico"><use href="#i-times"/></svg></div>
          </div>
          <div class="side-title">
            <span>Analyses shotgun kraken2</span>
            <svg class="ico"><use href="#i-pen"/></svg>
          </div>
          <div class="stats">
            <span class="stat first"><svg class="s-db"><use href="#i-db"/></svg>10.1 GB</span>
            <span class="stat"><svg class="s-hdd"><use href="#i-hdd"/></svg></span>
            <span class="stat"><svg class="s-pin"><use href="#i-pin"/></svg>1</span>
            <span class="stat"><svg class="s-trash"><use href="#i-trash"/></svg>16</span>
            <span class="stat"><svg class="s-slash"><use href="#i-slash"/></svg>35</span>
            <span class="stat"><svg class="s-sync"><use href="#i-sync"/></svg></span>
          </div>
          <div class="tool-bar">
            <svg class="ico"><use href="#i-check"/></svg>
            <svg class="ico"><use href="#i-compress"/></svg>
            <svg class="ico gear"><use href="#i-cog"/></svg>
          </div>
          <div class="side-list">
            <div class="side-items">
              <div class="dataset">
                <div class="dataset-head">
                  <span>37: <b>10samples</b></span>
                  <svg class="ico"><use href="#i-pen"/></svg>
                  <svg class="ico"><use href="#i-trash"/></svg>
                </div>
                <div class="dataset-info">a list with 10 <b>fastqsanger.gz</b> datasets</div>
              </div>
            </div>
            <div class="scroll-strip"></div>
          </div>
        </aside>
      </div>
    </section>

    <!-- orange marks drawn over the shots -->
    <span class="ring ring-a1"></span>
    <span class="ring ring-a2"></span>
    <span class="ring ring-b"></span>
    <span class="ring ring-c"></span>
    <span class="ring ring-d"></span>
    <span class="ring ring-e"></span>
    <span class="mark mark-a1">A</span>
    <span class="mark mark-a2">A</span>
    <span class="mark mark-b">B</span>
    <span class="mark mark-c">C</span>
    <span class="mark mark-d">D</span>
    <span class="mark mark-e">E</span>
  </body>
</html>
```
FILE: styles.css
```css
* {
  box-sizing: border-box;
}

html,
body {
  margin: 0;
  height: 1398px;
  overflow: hidden;
  background: #fff;
}

body {
  position: relative;
  padding-top: 106px;
  font-family: Inter, "Noto Sans", sans-serif;
  font-feature-settings: "zero";
  font-size: 20px;
  color: #2c3143;
}

.sprites {
  display: none;
}

svg {
  fill: currentColor;
  flex: none;
}

h1,
h2 {
  margin: 0;
  font-weight: 400;
}

button {
  font: inherit;
  cursor: pointer;
}

/* shots */
.shot {
  width: 2329px;
}

.shot-list {
  margin-left: 53px;
  height: 642px;
}

.shot-run {
  margin-left: 55px;
  margin-top: 80px;
  height: 559px;
}

.body-row {
  display: flex;
  height: calc(100% - 76px);
}

.shot-run .body-row {
  height: calc(100% - 74px);
}

/* masthead */
.masthead {
  display: flex;
  align-items: center;
  height: 76px;
  padding-left: 543px;
  background: #233e8d;
  color: #fff;
}

.shot-run .masthead {
  height: 74px;
  padding-left: 544px;
}

.masthead > svg {
  margin-bottom: 4px;
}

.nav-home {
  width: 33px;
  height: 30px;
  margin-right: 14px;
}

.shot-run .nav-home {
  margin-right: 16px;
}

.nav-item {
  display: flex;
  align-items: center;
  align-self: stretch;
  padding: 0 10px 4px 12px;
  font-size: 20.4px;
  white-space: nowrap;
}

.nav-item.active {
  width: 116px;
  justify-content: center;
  padding: 0 0 4px;
  background: #1a1c25;
}

.nav-item.caret {
  padding: 0 9px 4px 20px;
}

.nav-item.caret::after {
  content: "";
  margin-left: 5px;
  border-top: 7px solid #fff;
  border-left: 6px solid transparent;
  border-right: 6px solid transparent;
}

.nav-cap {
  width: 36px;
  height: 30px;
  margin-left: 24px;
}

.nav-hex {
  width: 31px;
  height: 31px;
  margin-left: 29px;
  color: #cfd8ee;
}

.nav-grid {
  width: 31px;
  height: 27px;
  margin-left: 33px;
}

.nav-bell {
  width: 24px;
  height: 28px;
  margin-left: 43px;
}

.quota {
  display: flex;
  align-items: center;
  justify-content: center;
  margin: 0 11px 4px auto;
  width: 166px;
  height: 32px;
  padding-left: 5px;
  border-radius: 4px;
  background: linear-gradient(to right, #c2ebc2 28%, #e9edf2 28%);
  color: #25537b;
  font-size: 21px;
}

.shot-run .quota {
  margin-right: 14px;
}

/* center column */
.center {
  width: 1840px;
  flex: none;
  padding: 27px 36px 0 25px;
}

.shot-run .center {
  width: 1838px;
  padding-left: 30px;
}

.ico {
  width: 20px;
  height: 20px;
}

.ico-sm {
  width: 15px;
  height: 15px;
}

.heading-row {
  display: flex;
  gap: 9px;
  height: 46px;
}

.heading {
  display: flex;
  align-items: center;
  flex: 1;
  height: 46px;
  margin-top: 4px;
}

.heading h1 {
  padding: 0 27px;
  font-size: 40px;
  line-height: 46px;
}

.heading-line {
  flex: 1;
  height: 2px;
  background: #dee2e6;
}

.heading-line.short {
  flex: none;
  width: 26px;
}

.btn-outline {
  display: flex;
  align-items: center;
  justify-content: center;
  gap: 6px;
  height: 46px;
  padding: 0;
  border: 2px solid #25537b;
  border-radius: 5px;
  background: #fff;
  color: #25537b;
  font-size: 19px;
}

.btn-create {
  width: 109px;
}

.btn-import {
  width: 115px;
}

.tabs {
  display: grid;
  grid-template-columns: repeat(3, 1fr);
  margin-top: 22px;
  height: 61px;
}

.tab {
  display: flex;
  align-items: center;
  justify-content: center;
  border-radius: 6px;
  color: #25537b;
  font-size: 20.5px;
}

.tab.selected {
  background: #25537b;
  color: #fff;
}

.search {
  display: flex;
  margin-top: 13px;
  height: 51px;
}

.search-input {
  display: flex;
  align-items: center;
  flex: 1;
  padding-left: 14px;
  border: 2px solid #bfc8d4;
  border-right: 0;
  border-radius: 5px 0 0 5px;
  background: #fff;
  font-size: 20.5px;
}

.search-input.focus {
  border: 2px solid #6a9fd0;
  border-radius: 0;
  box-shadow: 0 0 0 5px #c8d5df;
  position: relative;
}

.search-btn {
  display: flex;
  align-items: center;
  justify-content: center;
  width: 53px;
  border: 2px solid #d2d8e0;
  border-left-width: 0;
  background: #dee2e6;
  color: #2c3143;
}

.search-btn:last-child {
  border-radius: 0 5px 5px 0;
}

.search-btn .ico {
  height: 18px;
}

.sort-row {
  display: flex;
  align-items: center;
  margin-top: 14px;
  height: 47px;
}

.sort-label {
  margin-right: 8px;
}

.display-label {
  margin-left: auto;
  margin-right: 5px;
  margin-bottom: 4px;
  font-size: 20.8px;
}

.toggle {
  display: flex;
  height: 47px;
  border: 2px solid #25537b;
  border-radius: 5px;
  overflow: hidden;
  font-size: 19px;
  color: #25537b;
}

.toggle-item {
  display: flex;
  align-items: center;
  gap: 5px;
  padding: 0 13px;
}

.toggle-item.on {
  background: #25537b;
  color: #fff;
}

.toggle-item.square {
  padding: 0 12px;
  width: 42px;
  justify-content: center;
}

.toggle-item.square .ico {
  width: 16px;
  height: 18px;
}

/* workflow card */
.wf-card {
  width: 874px;
  height: 254px;
  margin: 27px 0 0 8px;
  padding: 15px 12px 0 15px;
  border: 2px solid #e2e5ea;
  border-left: 4px solid #25537b;
  border-radius: 14px;
}

.wf-meta {
  display: flex;
  align-items: center;
  height: 30px;
  font-size: 19px;
  white-space: nowrap;
}

.globe {
  margin: 0 8px 0 3px;
}

.badge {
  display: flex;
  align-items: center;
  gap: 7px;
  height: 28px;
  margin-left: 19px;
  padding: 0 7px;
  border: 2px solid #25537b;
  border-radius: 6px;
  color: #25537b;
  font-size: 16.3px;
  font-weight: 700;
}

.badge.pill {
  margin-left: auto;
  border-radius: 15px;
  padding: 0 9px 0 12px;
  font-size: 16px;
}

.star {
  width: 22px;
  margin-left: 13px;
  color: #25537b;
}

.eye {
  width: 23px;
  margin-left: 14px;
  color: #25537b;
}

.tri {
  margin-left: 19px;
  margin-right: 3px;
  border-top: 8px solid #25537b;
  border-left: 7px solid transparent;
  border-right: 7px solid transparent;
}

.wf-title {
  margin-top: 4px;
  font-size: 25.9px;
  font-weight: 700;
  line-height: 36px;
  white-space: nowrap;
}

.tags {
  display: flex;
  gap: 7px;
  margin-top: 16px;
}

.tag {
  display: flex;
  align-items: center;
  gap: 11px;
  height: 34px;
  padding: 0 7px;
  border-radius: 5px;
  font-size: 20.5px;
  color: #111;
  white-space: nowrap;
}

.tag svg {
  width: 14px;
  height: 18px;
  color: #2f5078;
}

.t-teal {
  background: #00d0d8;
}

.t-sky {
  padding-right: 10px;
  background: #00d6f8;
}

.t-mint {
  gap: 8px;
  background: #00e8dc;
}

.t-green {
  padding: 0 12px 0 8px;
  background: #00dc3c;
  font-size: 21.5px;
  font-weight: 700;
  color: #000;
}

.add-tags {
  display: flex;
  align-items: center;
  gap: 7px;
  height: 32px;
  margin: 10px 0 0 6px;
  font-size: 20.5px;
}

.add-tags svg {
  width: 30px;
  height: 26px;
}

.wf-actions {
  display: flex;
  justify-content: flex-end;
  margin-top: 14px;
  color: #25537b;
}

.act-group {
  display: flex;
  height: 46px;
  border: 2px solid #25537b;
  border-radius: 6px;
}

.act {
  display: flex;
  align-items: center;
  justify-content: center;
  width: 53px;
  border-left: 2px solid #25537b;
}

.act:first-child {
  border-left: 0;
}

.act-edit {
  display: flex;
  align-items: center;
  gap: 8px;
  width: 102px;
  height: 46px;
  margin-left: 7px;
  padding-left: 15px;
  border: 2px solid #25537b;
  border-right: 0;
  border-radius: 6px 0 0 6px;
  font-size: 20.5px;
}

.act-run {
  display: flex;
  align-items: center;
  justify-content: center;
  width: 55px;
  height: 46px;
  border-radius: 6px;
  background: #25537b;
  color: #fff;
}

/* run form */
.run-head {
  display: flex;
  align-items: flex-start;
}

.run-title {
  flex: 1;
  font-size: 27px;
  font-weight: 700;
  line-height: 36px;
  white-space: nowrap;
}

.run-title em {
  font-size: 26.5px;
  font-weight: 400;
}

.btn-cog {
  display: flex;
  align-items: center;
  justify-content: center;
  width: 64px;
  height: 57px;
  border: 2px solid #cfd5dc;
  border-radius: 6px;
  background: #dee2e6;
  color: #2c3143;
}

.btn-run {
  display: flex;
  align-items: center;
  gap: 14px;
  width: 210px;
  height: 57px;
  margin-left: 18px;
  padding-left: 21px;
  border: 0;
  border-radius: 6px;
  background: #1c3f5e;
  color: #fff;
  font-size: 20.4px;
}

.btn-run .ico {
  width: 21px;
  height: 24px;
}

.field-label {
  display: block;
  margin-top: 29px;
  font-size: 22.4px;
  font-weight: 700;
  line-height: 30px;
}

.req {
  font-weight: 400;
  font-size: 17px;
}

.field-row {
  display: flex;
  align-items: flex-start;
  margin-top: 11px;
}

.field-left {
  width: 207px;
  flex: none;
}

.seg {
  display: flex;
  width: 129px;
  height: 56px;
  border: 2px solid #cfd5dc;
  border-radius: 6px;
  overflow: hidden;
}

.seg-item {
  flex: 1;
  display: flex;
  align-items: center;
  justify-content: center;
  background: #dee2e6;
}

.seg-item.on {
  background: #c0c8d2;
}

.seg-item .ico {
  width: 24px;
  height: 22px;
}

.formats {
  display: flex;
  align-items: center;
  margin-top: 4px;
  height: 30px;
  font-size: 21px;
  color: #25537b;
  white-space: nowrap;
}

.tri.small {
  margin-left: 7px;
}

.select {
  flex: 1;
  display: flex;
  align-items: center;
  height: 63px;
  padding-left: 22px;
  border: 2px solid #c8ced6;
  border-radius: 6px;
  font-size: 21.3px;
}

.tri.grey {
  margin-left: auto;
  margin-right: 24px;
  border-top-color: #999;
}

.expand {
  display: block;
  margin-top: 24px;
  font-size: 20.6px;
  line-height: 30px;
  color: #25537b;
}

/* history panel */
.side {
  flex: 1;
  display: flex;
  flex-direction: column;
  padding-top: 20px;
  border-left: 2px solid #c0c8d4;
  overflow: hidden;
}

.shot-run .side {
  padding-right: 2px;
}

.side-head {
  display: flex;
  align-items: center;
  height: 36px;
  padding: 0 41px 0 32px;
  color: #25537b;
}

.side-name {
  flex: 1;
  color: #2c3143;
  font-size: 25px;
}

.head-ico {
  margin-left: 33px;
  height: 22px;
}

.side-search {
  display: flex;
  height: 50px;
  margin: 19px 24px 0 26px;
}

.side-search .search-input {
  padding-left: 12px;
  font-size: 21px;
}

.side-title {
  display: flex;
  align-items: flex-start;
  justify-content: space-between;
  margin: 30px 41px 0 26px;
  font-size: 31px;
  line-height: 40px;
  color: #2c3143;
}

.shot-run .side-title {
  margin-top: 28px;
}

.side-title span {
  width: 280px;
}

.side-title .ico {
  margin-top: 9px;
  color: #25537b;
}

.stats {
  display: flex;
  align-items: center;
  gap: 27.5px;
  height: 28px;
  margin-top: 35px;
  padding: 0 13px 0 14px;
  color: #25537b;
  font-size: 20px;
}

.stat {
  display: flex;
  align-items: center;
  gap: 5px;
}

.stat.first {
  margin-right: auto;
}

.stat svg {
  height: 20px;
}

.s-db {
  width: 18px;
}

.s-hdd {
  width: 23px;
}

.s-pin {
  width: 16px;
}

.s-trash {
  width: 18px;
}

.s-slash {
  width: 25px;
}

.s-sync {
  width: 20px;
}

.tool-bar {
  display: flex;
  align-items: center;
  gap: 34px;
  height: 46px;
  margin-top: 16px;
  padding: 0 13px 0 17px;
  background: #dee2e6;
  color: #25537b;
}

.gear {
  margin-left: auto;
}

.side-list {
  flex: 1;
  display: flex;
}

.side-items {
  flex: 1;
  padding: 7px 7px 0 6px;
}

.scroll-strip {
  width: 22px;
  border-left: 2px solid #eceef0;
  background: #f9f9f9;
}

.dataset {
  height: 111px;
  padding: 14px 14px 0 13px;
  border-radius: 8px;
  background: #c2ebc2;
  color: #2f5a4a;
}

.dataset-head {
  display: flex;
  align-items: center;
  gap: 17px;
  height: 32px;
  font-size: 21.3px;
}

.dataset-head span {
  flex: 1;
}

.dataset-head .ico {
  color: #25537b;
}

.dataset-info {
  margin-top: 25px;
  font-size: 18.4px;
}

/* orange annotations */
.ring {
  position: absolute;
  border: 15px solid #ed7d31;
  border-radius: 50%;
}

.ring-a1 {
  left: 599px;
  top: 93px;
  width: 201px;
  height: 106px;
}

.ring-a2 {
  left: 1446px;
  top: 256px;
  width: 228px;
  height: 106px;
}

.ring-b {
  left: 46px;
  top: 333px;
  width: 185px;
  height: 80px;
}

.ring-c {
  left: 871px;
  top: 661px;
  width: 104px;
  height: 84px;
}

.ring-d {
  left: 262px;
  top: 1031px;
  width: 227px;
  height: 107px;
}

.ring-e {
  left: 1638px;
  top: 905px;
  width: 226px;
  height: 106px;
}

.mark {
  position: absolute;
  color: #ed7d31;
  font-family: Lato, "Liberation Sans", sans-serif;
  font-size: 74px;
  font-weight: 900;
  line-height: 74px;
}

.mark-a1 {
  left: 559px;
  top: 21px;
}

.mark-a2 {
  left: 1510px;
  top: 174px;
}

.mark-b {
  left: 67px;
  top: 260px;
}

.mark-c {
  left: 849px;
  top: 576px;
}

.mark-d {
  left: 337px;
  top: 960px;
}

.mark-e {
  left: 1622px;
  top: 830px;
}
```
